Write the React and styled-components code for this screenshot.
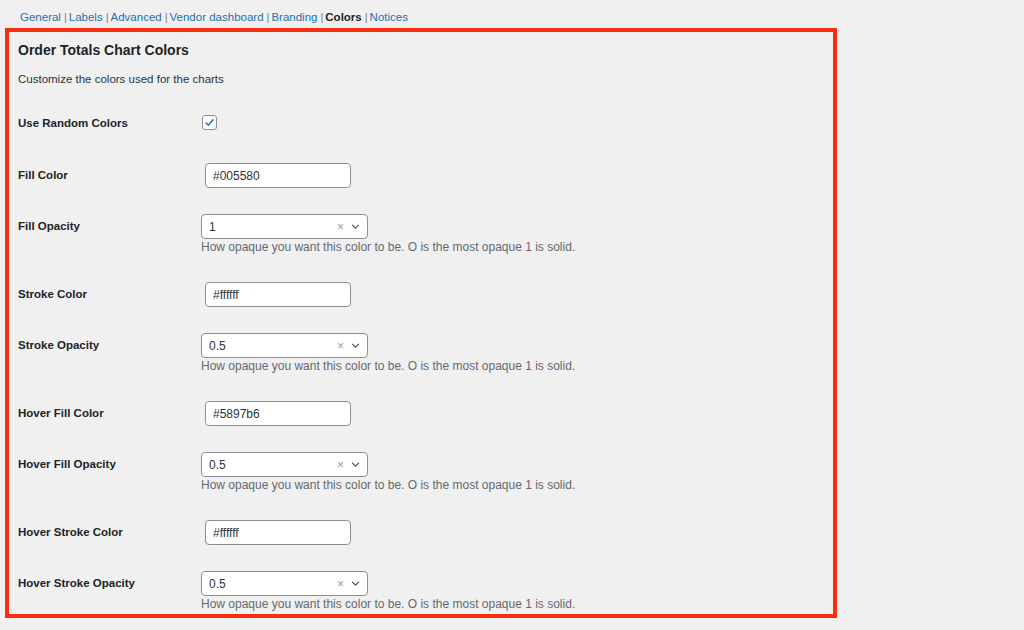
import React from "react";
import styled, { createGlobalStyle } from "styled-components";

const Global = createGlobalStyle`
  html,body{margin:0;background:#f0f0f1;font-family:-apple-system,"Liberation Sans",Arial,sans-serif;color:#1d2327;}
`;
const Page = styled.div`padding:8px 0 0 5px;width:832px;`;
const Tabs = styled.div`display:flex;align-items:center;font-size:11.5px;padding-left:15px;height:17px;`;
const Tab = styled.a`color:${p=>p.$active?"#1d2327":"#2271b1"};font-weight:${p=>p.$active?700:400};text-decoration:none;`;
const Sep = styled.span`color:#787c82;margin:0 2px 0 3px;font-size:11px;`;
const Box = styled.div`margin-top:3px;border:4px solid #f92d0f;padding:9px 9px 10px 9px;height:590px;box-sizing:border-box;`;
const Title = styled.h2`margin:0;font-size:14px;font-weight:700;line-height:18px;`;
const Desc = styled.p`margin:12px 0 0;font-size:11.5px;line-height:16px;color:#2c3338;`;
const Rows = styled.div`display:flex;flex-direction:column;gap:26px;margin-top:28px;`;
const Row = styled.div`display:grid;grid-template-columns:183px 1fr;align-items:start;`;
const Label = styled.div`font-size:11.5px;font-weight:700;line-height:24px;height:${p=>p.$h||24}px;display:flex;align-items:center;`;
const TextInput = styled.input`margin-left:4px;width:146px;height:25px;box-sizing:border-box;border:1px solid #8c8f94;border-radius:4px;padding:0 7px;font-size:12px;color:#2c3338;background:#fff;font-family:inherit;`;
const Select = styled.div`width:167px;height:25px;box-sizing:border-box;border:1px solid #8c8f94;border-radius:4px;background:#fff;display:flex;align-items:center;padding:0 6px 0 7px;font-size:12px;color:#2c3338;`;
const Val = styled.span`flex:1;`;
const Clear = styled.span`color:#999;font-size:12px;margin-right:6px;`;
const Help = styled.div`font-size:12px;line-height:17px;color:#646970;`;
const Check = styled.span`width:13px;height:13px;border:1px solid #8c8f94;border-radius:3px;background:#fff;display:flex;align-items:center;justify-content:center;margin:0 0 0 1px;`;

const Chevron = () => (
  <svg width="11" height="11" viewBox="0 0 20 20"><path d="M4 7l6 6 6-6" fill="none" stroke="#50575e" strokeWidth="2.4"/></svg>
);

const ColorRow = ({ label, value }) => (
  <Row><Label>{label}</Label><div><TextInput defaultValue={value} /></div></Row>
);
const OpRow = ({ label, value }) => (
  <Row><Label>{label}</Label><div>
    <Select><Val>{value}</Val><Clear>×</Clear><Chevron /></Select>
    <Help>How opaque you want this color to be. O is the most opaque 1 is solid.</Help>
  </div></Row>
);

const tabs = ["General","Labels","Advanced","Vendor dashboard","Branding","Colors","Notices"];

export default function App() {
  return (
    <Page>
      <Global />
      <Tabs>
        {tabs.map((t,i)=>(
          <React.Fragment key={t}>
            {i>0 && <Sep>|</Sep>}
            <Tab $active={t==="Colors"}>{t}</Tab>
          </React.Fragment>
        ))}
      </Tabs>
      <Box>
        <Title>Order Totals Chart Colors</Title>
        <Desc>Customize the colors used for the charts</Desc>
        <Rows>
          <Row style={{marginBottom:6}}><Label $h={16}>Use Random Colors</Label><div>
            <Check><svg width="11" height="11" viewBox="0 0 20 20"><path d="M3 10l5 5 9-11" fill="none" stroke="#2271b1" strokeWidth="2.6"/></svg></Check>
          </div></Row>
          <ColorRow label="Fill Color" value="#005580" />
          <OpRow label="Fill Opacity" value="1" />
          <ColorRow label="Stroke Color" value="#ffffff" />
          <OpRow label="Stroke Opacity" value="0.5" />
          <ColorRow label="Hover Fill Color" value="#5897b6" />
          <OpRow label="Hover Fill Opacity" value="0.5" />
          <ColorRow label="Hover Stroke Color" value="#ffffff" />
          <OpRow label="Hover Stroke Opacity" value="0.5" />
        </Rows>
      </Box>
    </Page>
  );
}
